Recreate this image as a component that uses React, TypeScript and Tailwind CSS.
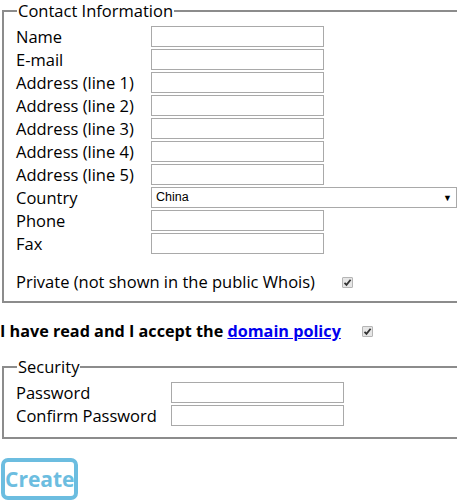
import { useState } from "react";

const FONT = { fontFamily: '"Open Sans", "Noto Sans", sans-serif' };

const contactRows = [
  "Name",
  "E-mail",
  "Address (line 1)",
  "Address (line 2)",
  "Address (line 3)",
  "Address (line 4)",
  "Address (line 5)",
];

function Check() {
  return (
    <span className="inline-flex w-[11px] h-[11px] items-center justify-center border border-[#b5b5b5] bg-[#e6e6e6] rounded-[1px]">
      <svg width="9" height="9" viewBox="0 0 9 9">
        <path d="M1.5 4.8 L3.5 6.8 L7.6 1.8" fill="none" stroke="#333" strokeWidth="1.8" />
      </svg>
    </span>
  );
}

function TextBox({ type = "text" }: { type?: string }) {
  return (
    <input
      type={type}
      className="w-[173px] h-[21px] border border-[#a9a9a9] bg-white outline-none px-1 text-[13px]"
    />
  );
}

export default function App() {
  const [country, setCountry] = useState("China");

  return (
    <div className="w-[457px] min-h-[503px] overflow-hidden bg-white text-black text-[16.5px]" style={FONT}>
      {/* contact block */}
      <fieldset className="w-[470px] ml-[2px] border-2 border-[#8c8c8c] pl-[12px] pb-[7px]">
        <legend className="ml-[1px] px-[1px] leading-[21px] text-[16.5px]">Contact Information</legend>
        <div className="grid grid-cols-[135px_1fr] auto-rows-[23px] items-center mt-[4px] leading-[23px]">
          {contactRows.map((r) => (
            <div key={r} className="contents">
              <span>{r}</span>
              <div className="flex">
                <TextBox />
              </div>
            </div>
          ))}
          <span>Country</span>
          <div className="relative w-[306px] flex">
            <select
              value={country}
              onChange={(e) => setCountry(e.target.value)}
              className="appearance-none w-full h-[21px] border border-[#a9a9a9] bg-white pl-[4px] text-[12.5px] leading-[19px] outline-none"
              style={{ fontFamily: '"Liberation Sans", Arial, sans-serif' }}
            >
              <option>China</option>
            </select>
            <span className="absolute right-[5px] top-[0px] text-[9px] leading-[21px] pointer-events-none">▼</span>
          </div>
          <span>Phone</span>
          <div className="flex">
            <TextBox />
          </div>
          <span>Fax</span>
          <div className="flex">
            <TextBox />
          </div>
        </div>
        <div className="flex items-center h-[23px] mt-[16px]">
          <span>Private (not shown in the public Whois)</span>
          <span className="ml-[27px] flex">
            <Check />
          </span>
        </div>
      </fieldset>

      {/* policy */}
      <div className="flex items-center h-[22px] mt-[17px] font-bold text-[16.2px]">
        <span>
          I have read and I accept the{" "}
          <a href="#" className="text-[#0000ee] underline">
            domain policy
          </a>
        </span>
        <span className="ml-[21px] flex">
          <Check />
        </span>
      </div>

      {/* security */}
      <fieldset className="w-[470px] ml-[2px] mt-[14px] border-2 border-[#8c8c8c] pl-[12px] pb-[10px]">
        <legend className="ml-[1px] px-[1px] leading-[21px] text-[16.5px]">Security</legend>
        <div className="grid grid-cols-[155px_1fr] auto-rows-[23px] items-center mt-[4px] leading-[23px]">
          <span>Password</span>
          <div className="flex">
            <TextBox type="password" />
          </div>
          <span>Confirm Password</span>
          <div className="flex">
            <TextBox type="password" />
          </div>
        </div>
      </fieldset>

      <button className="mt-[19px] ml-[1px] w-[77px] h-[42px] border-4 border-[#6cbde0] rounded-[7px] text-[#6cbde0] font-bold text-[21px] leading-none">
        Create
      </button>
    </div>
  );
}
